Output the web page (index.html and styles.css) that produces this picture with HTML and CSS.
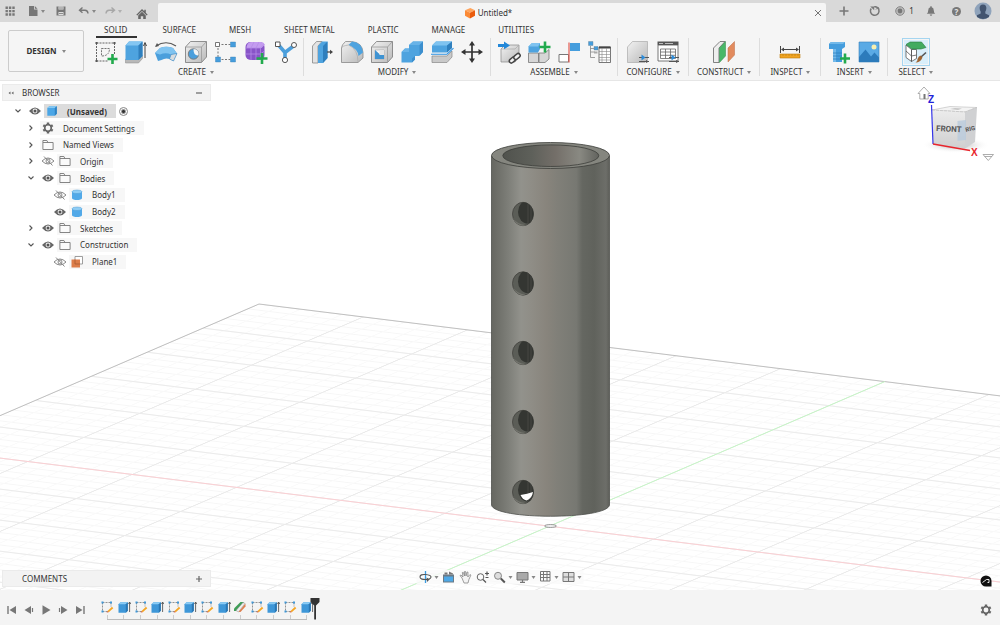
FILE: index.html
```
<!DOCTYPE html>
<html lang="en">

<head>
    <meta charset="UTF-8">
    <meta name="viewport" content="width=device-width, initial-scale=1.0">
    <title>Untitled*</title>
    <link rel="stylesheet" href="styles.css">
</head>

<body>
    <!-- shared icons -->
    <svg class="defs" width="0" height="0" aria-hidden="true">
        <symbol id="eye" viewBox="0 0 16 16">
            <path d="M2 8Q8 1 14 8Q8 15 2 8z" fill="#666" />
            <circle cx="8" cy="8" r="2.4" fill="#eee" />
            <circle cx="8" cy="8" r="1.5" fill="#555" />
        </symbol>
        <symbol id="eye-off" viewBox="0 0 16 16">
            <path d="M2 8Q8 2 14 8Q8 14 2 8zM4 3.5l8.5 9" fill="none" stroke="#888" stroke-width="1" />
            <circle cx="8" cy="8" r="2" fill="none" stroke="#888" stroke-width="1" />
        </symbol>
        <symbol id="folder" viewBox="0 0 16 16">
            <path d="M2.9 12.5v-9h4l1 2h5.2v7zM3 5.5h5" fill="#fafafa" stroke="#777" stroke-width=".9" />
        </symbol>
        <symbol id="gear" viewBox="0 0 16 16">
            <path d="M8 2.6v1.6M8 11.8v1.6M3.3 5.3l1.5.9M11.2 9.8l1.5.9M3.3 10.7l1.5-.9M11.2 6.2l1.5-.9" stroke="#666" stroke-width="2.4" />
            <circle cx="8" cy="8" r="3.3" fill="none" stroke="#666" stroke-width="1.7" />
        </symbol>
        <symbol id="right" viewBox="0 0 12 12">
            <path d="M4.5 3.500l2.500 2.500-2.500 2.500" fill="none" stroke="#555" stroke-width="1.1" />
        </symbol>
        <symbol id="down" viewBox="0 0 12 12">
            <path d="M3.500 4.500l2.500 2.500 2.500-2.500" fill="none" stroke="#555" stroke-width="1.1" />
        </symbol>
        <symbol id="cube" viewBox="0 0 16 16">
            <path d="M3.3 5l2-1.8h7.5v7.6l-2 2H3.3z" fill="#4ba6e6" />
            <path d="M3.3 5l2-1.8h7.5l-2 1.8z" fill="#86c8f2" />
            <path d="M10.8 5l2-1.8v7.6l-2 2z" fill="#2f82c2" />
        </symbol>
        <symbol id="body" viewBox="0 0 16 16">
            <path d="M3 4.8v6.4c0 2.4 10 2.4 10 0V4.8z" fill="#52a9e8" />
            <ellipse cx="8" cy="4.8" rx="5" ry="1.8" fill="#8fcdf5" stroke="#4b9bd4" stroke-width=".5" />
        </symbol>
        <symbol id="sketch" viewBox="0 0 16 16">
            <path d="M3.5 3.5h8.5M3.5 3.5v9h5M12 3.5v4" fill="none" stroke="#888" stroke-width=".9" stroke-dasharray="2 1" />
            <path d="M2.5 2.5h2v2h-2zM11 2.5h2v2h-2zM2.5 11.5h2v2h-2z" fill="#3e97d8" />
            <path d="M8.5 12l4.5-4.2 1.3 1.4-4.6 4z" fill="#f5a623" />
            <path d="M7.6 13.6l.9-1.6 1.2 1.2z" fill="#d2553a" />
        </symbol>
        <symbol id="extrude" viewBox="0 0 16 16">
            <path d="M2.5 5.2l2-2h7.3v8.6l-2 2H2.5z" fill="#3e97d8" />
            <path d="M2.5 5.2l2-2h7.3l-2 2z" fill="#8acbf5" />
            <path d="M9.8 5.2l2-2v8.6l-2 2z" fill="#2b77b3" />
            <path d="M13.6 13V3.5M12.5 5l1.1-2 1.1 2" fill="none" stroke="#444" stroke-width=".8" />
        </symbol>
        <symbol id="plane" viewBox="0 0 16 16">
            <path d="M6 2.5h7.5v7.5H6z" fill="#fff" stroke="#888" stroke-width=".8" />
            <path d="M2.5 5.5h8.5v8h-8.5z" fill="#dc7d4a" />
            <path d="M6 5.5v4.5h5" fill="none" stroke="#a55a32" stroke-width=".8" />
        </symbol>
        <symbol id="cplane" viewBox="0 0 16 16">
            <path d="M2 9.500L8.500 3h3.500L5.500 12H2z" fill="#3f9e57" />
            <path d="M4 11.500L11 3.500l2 1-6.500 8.500z" fill="#eee" stroke="#888" stroke-width=".5" />
            <path d="M6.500 13L13.500 4.500v3L8.500 13z" fill="#dd8050" />
        </symbol>
        <linearGradient id="grey" x2="1" y2="1">
            <stop offset="0" stop-color="#f2f2f2" />
            <stop offset="1" stop-color="#b9b9b9" />
        </linearGradient>
    </svg>

    <header class="topbar">
        <div class="quick">
            <button class="icon-btn" aria-label="Data panel"><svg viewBox="0 0 16 16">
                <path d="M3.5 3.5h2.4v2.4H3.5zM6.9 3.5h2.4v2.4H6.9zM10.3 3.5h2.4v2.4h-2.4zM3.5 6.9h2.4v2.4H3.5zM6.9 6.9h2.4v2.4H6.9zM10.3 6.9h2.4v2.4h-2.4zM3.5 10.3h2.4v2.4H3.5zM6.9 10.3h2.4v2.4H6.9zM10.3 10.3h2.4v2.4h-2.4z" fill="#777" /></svg></button>
            <button class="icon-btn caret file" aria-label="File"><svg viewBox="0 0 16 16">
                <path d="M4 3h5v3.5h3.5V13H4z" fill="#777" />
                <path d="M9.8 3l2.7 2.8H9.8z" fill="#777" /></svg></button>
            <button class="icon-btn" aria-label="Save"><svg viewBox="0 0 16 16">
                <path d="M3.5 3.5h9v9h-9z" fill="#777" />
                <path d="M5.5 3.5h5v3h-5zM5.5 9h5v3h-5z" fill="#ddd" />
                <path d="M6 5h4M6 10.5h4" stroke="#777" stroke-width=".8" /></svg></button>
            <button class="icon-btn caret undo" aria-label="Undo"><svg viewBox="0 0 16 16">
                <path d="M6.5 4.5L3.5 7.2l3 2.5M4 7.2h5q2.8 0 3 3.3" fill="none" stroke="#777" stroke-width="1.4" /></svg></button>
            <button class="icon-btn caret redo" aria-label="Redo"><svg viewBox="0 0 16 16">
                <path d="M9.5 4.5l3 2.7-3 2.5M12 7.2H7q-2.8 0-3 3.3" fill="none" stroke="#777" stroke-width="1.4" /></svg></button>
            <button class="icon-btn home" aria-label="Home"><svg viewBox="0 0 16 16">
                <path d="M8 3L2.300 8.700l1 .9L8 5l4.700 4.600 1-.9L11.800 6.800V3.700h-1.500v1.600z" fill="#666" />
                <path d="M4.200 9.500L8 5.800l3.800 3.700V13H9.200v-2.700H6.800V13H4.200z" fill="#666" /></svg></button>
        </div>
        <div class="doc-tab">
            <svg class="doc-icon" viewBox="0 0 12 12">
                <path d="M1 3.2L6.3 1 11 3.3 6 5.7z" fill="#ffa45c" />
                <path d="M1 3.2l5 2.5V11.5L1 8.7z" fill="#fb8a36" />
                <path d="M6 5.7l5-2.4V8.7l-5 2.8z" fill="#ea5b0c" />
            </svg>
            <span class="doc-title">Untitled*</span>
            <button class="close" aria-label="Close"><svg viewBox="0 0 8 8">
                <path d="M1 1l6 6M7 1L1 7" stroke="#666" stroke-width=".9" /></svg></button>
        </div>
        <div class="account">
            <button class="icon-btn" aria-label="New design"><svg viewBox="0 0 16 16">
                <path d="M8 3.500v9M3.500 8h9" stroke="#777" stroke-width="1.6" /></svg></button>
            <button class="icon-btn extensions" aria-label="Extensions"><svg viewBox="0 0 16 16">
                <path d="M4.2 5.5a4.3 4.3 0 1 0 3-1.8M8.5 3.7a4.3 4.3 0 0 1 3.6 3.2" fill="none" stroke="#777" stroke-width="1.5" />
                <path d="M3.2 3.5h4v3.8z" fill="#777" />
                <path d="M9 6.500l2.500-2.500" fill="none" stroke="#777" stroke-width="1" /></svg></button>
            <button class="icon-btn jobs" aria-label="Job status"><svg viewBox="0 0 16 16">
                <circle cx="8" cy="8" r="4.3" fill="#bbb" stroke="#888" stroke-width="1" />
                <circle cx="8" cy="8" r="2.4" fill="#777" /></svg>1</button>
            <button class="icon-btn" aria-label="Notifications"><svg viewBox="0 0 16 16">
                <path d="M7.3 3.2h1.4v1q2.1.5 2.1 3.3 0 2.2 1.4 3.3H3.8q1.4-1.1 1.4-3.3 0-2.8 2.1-3.3zM6.7 11.5h2.600q-.2 1.3-1.3 1.3t-1.3-1.3z" fill="#777" /></svg></button>
            <button class="icon-btn help" aria-label="Help"><span>?</span></button>
            <button class="avatar" aria-label="Profile"><svg viewBox="0 0 18 18">
                <circle cx="9" cy="9" r="8.500" fill="#8fa3bb" />
                <path d="M9 2.5c4 0 4 4.5 2.300 7.3v1.7l3.700 1.7v1.8q-6 4-12 0v-1.8l3.700-1.7V9.8C5 7 5 2.5 9 2.5z" fill="#42546f" /></svg></button>
        </div>
    </header>

    <section class="ribbon">
        <button class="workspace caret">DESIGN</button>
        <div class="ribbon-main">
            <nav class="tabs">
                <button class="tab active">SOLID</button>
                <button class="tab">SURFACE</button>
                <button class="tab">MESH</button>
                <button class="tab">SHEET METAL</button>
                <button class="tab">PLASTIC</button>
                <button class="tab">MANAGE</button>
                <button class="tab">UTILITIES</button>
            </nav>
            <div class="groups">
                <div class="group first">
                    <div class="tools">
                        <button class="tool" aria-label="Create sketch"><svg viewBox="0 0 24 24">
                            <path d="M2.5 3h18M2.5 3v18M2.5 21h12M20.5 3v11" fill="none" stroke="#555" stroke-width=".9" stroke-dasharray="2 1" />
                            <path d="M1.5 2h2v2h-2zM19.5 2h2v2h-2zM1.5 20h2v2h-2z" fill="#555" />
                            <path d="M7.5 8.500h8q0 7.500-8 7.500z" fill="none" stroke="#666" stroke-width=".9" stroke-dasharray="2 1" />
                            <path d="M18.5 14v10M13.5 19h10" stroke="#22aa4d" stroke-width="2.6" /></svg></button>
                        <button class="tool" aria-label="Extrude"><svg viewBox="0 0 24 24">
                            <path d="M1.5 19h13l4-3.5v3L14.5 23h-13z" fill="#b8b8b8" stroke="#888" stroke-width=".5" />
                            <path d="M1.5 5.5L5 1.5h13.5V16l-4 4h-13z" fill="#4ea3df" />
                            <path d="M1.5 5.5L5 1.5h13.5l-4 4z" fill="#84c6f2" />
                            <path d="M14.5 5.5l4-4V16l-4 4z" fill="#2f7fbd" />
                            <path d="M21 18V3.5M19.5 6L21 2.5 22.5 6" fill="none" stroke="#444" stroke-width="1" /></svg></button>
                        <button class="tool" aria-label="Revolve"><svg viewBox="0 0 24 24">
                            <path d="M2 6Q12-.5 22 6" fill="none" stroke="#555" stroke-width="1.2" />
                            <path d="M1 7l2-4 2 3z" fill="#555" />
                            <path d="M1 13l5-5q6-2.5 13 0l4 5.500-3.5 7.500-4-2q-4-1.5-8 1L4 21z" fill="#4b9fdc" />
                            <path d="M1 13l5-5q6-2.5 13 0l4 5.500-6 1q-5-2.5-11 0z" fill="#7fc3f0" />
                            <path d="M17 14.500l6-1-3.500 7.500-4-2z" fill="#d8dcdf" stroke="#3a88c4" stroke-width=".6" /></svg></button>
                        <button class="tool" aria-label="Hole"><svg viewBox="0 0 24 24">
                            <path d="M1.5 7l5-5.5h16V17l-5 5.5h-16z" fill="url(#grey)" stroke="#777" stroke-width=".8" />
                            <path d="M1.5 7h16v15.5M17.5 7l5-5.5" fill="none" stroke="#999" stroke-width=".8" />
                            <circle cx="9.5" cy="14" r="5.2" fill="#4b9fdc" stroke="#777" stroke-width=".9" />
                            <path d="M9.5 9q6 .5 5 6.5-5 .5-5-6.5z" fill="#f4f4f4" /></svg></button>
                        <button class="tool" aria-label="Pattern"><svg viewBox="0 0 24 24">
                            <path d="M4 4.500h16M4 4.500v15M4 19.500h16" fill="none" stroke="#777" stroke-dasharray="2 1.5" />
                            <path d="M1.500 2.500h4v4h-4z" fill="#fff" stroke="#555" stroke-width=".8" />
                            <path d="M16.500 2h5v5h-5zM16.500 17h5v5h-5zM1.500 17h5v5h-5z" fill="#459ddd" stroke="#377fb2" stroke-width=".4" /></svg></button>
                        <button class="tool" aria-label="Create form"><svg viewBox="0 0 24 24">
                            <rect x="1.5" y="2" width="19" height="18" rx="5" fill="#8854c8" />
                            <path d="M2.5 7q1-5 5-5h9q4 0 4 3l-3 3H3z" fill="#c49cf0" />
                            <path d="M2 8h14.5l4-4M2 14h14.5l4-3M7 20V8l3-6M12 20V8l3-6M16.5 8v12" fill="none" stroke="#b48be6" stroke-width=".8" />
                            <path d="M18 13v11M12.5 18.5h11" stroke="#22aa4d" stroke-width="2.6" /></svg></button>
                        <button class="tool" aria-label="Automated modeling"><svg viewBox="0 0 24 24">
                            <path d="M4.5 5l6.500 7.500L19.5 6M11 12v8" fill="none" stroke="#4b9fdc" stroke-width="3.6" />
                            <path d="M1.500 2H6v4.5H1.500z" fill="#fff" stroke="#555" />
                            <circle cx="20" cy="5" r="2.5" fill="#fff" stroke="#555" />
                            <circle cx="11" cy="20" r="2.6" fill="#fff" stroke="#555" /></svg></button>
                    </div>
                    <button class="group-name caret">CREATE</button>
                </div>
                <div class="group">
                    <div class="tools">
                        <button class="tool" aria-label="Press pull"><svg viewBox="0 0 24 24">
                            <path d="M2.5 6l4-4.5H12L8 6v17H2.5z" fill="#e3e3e3" stroke="#888" stroke-width=".8" />
                            <path d="M8 6l4-4.5h5.5V18L13 23H8z" fill="#4ea3df" />
                            <path d="M13 6l4.5-4.5V18L13 23z" fill="#2f7fbd" />
                            <path d="M17 12h4" stroke="#444" stroke-width="1.2" />
                            <path d="M20 9.8l3 2.2-3 2.2z" fill="#444" /></svg></button>
                        <button class="tool" aria-label="Fillet"><svg viewBox="0 0 24 24">
                            <path d="M1.5 8q0-3 4-6.500h6q11 1 11.5 11V18l-5 4.500h-16.500z" fill="url(#grey)" stroke="#888" stroke-width=".8" />
                            <path d="M12 1.500q10 1 11 11l-4.500 3.500Q18 9 8.500 5z" fill="#4ea3df" />
                            <path d="M1.500 8q0-2 7-3 9.500 4 9.500 17" fill="none" stroke="#aaa" stroke-width=".7" /></svg></button>
                        <button class="tool" aria-label="Shell"><svg viewBox="0 0 24 24">
                            <path d="M1.5 7l5-5.5h16V17l-5 5.5h-16z" fill="url(#grey)" stroke="#777" stroke-width=".8" />
                            <path d="M1.5 7h16v15.5M17.5 7l5-5.5" fill="none" stroke="#999" stroke-width=".8" />
                            <path d="M5 10h9v9H5z" fill="#f7f7f7" stroke="#999" stroke-width=".5" />
                            <path d="M5 10l5 4.5h4V19H5z" fill="#3f93d2" />
                            <path d="M9.5 10v5h4.5v-5z" fill="#e4e4e4" /></svg></button>
                        <button class="tool" aria-label="Combine"><svg viewBox="0 0 24 24">
                            <path d="M9 5l4-3.500h10V12l-4 4h-4v3.500l-3 3H1.500V12l3.500-3.500h4z" fill="#4ea3df" />
                            <path d="M9 5l4-3.500h10L19.500 5zM1.500 12L5 8.500h4V12z" fill="#68b3e8" />
                            <path d="M19.500 5L23 1.500V12l-3.500 4zM12 18.500l3-2.500v3.500l-3 3z" fill="#3c8fce" /></svg></button>
                        <button class="tool" aria-label="Split body"><svg viewBox="0 0 24 24">
                            <path d="M2 16h15l5-5v6l-5 5.500H2z" fill="#c9c9c9" stroke="#888" stroke-width=".7" />
                            <path d="M2 5.500l4-4h16V8l-5 4.500H2z" fill="#4ea3df" />
                            <path d="M2 5.500l4-4h16l-5 4z" fill="#7fc3f0" />
                            <path d="M17 5.500l5-4V8l-5 4.500z" fill="#2f7fbd" />
                            <path d="M1 14.200h16l6.500-6" fill="none" stroke="#2b91e2" stroke-width="1.1" /></svg></button>
                        <button class="tool" aria-label="Move"><svg viewBox="0 0 24 24">
                            <path d="M12 4v16M4 12h16" stroke="#333" stroke-width="1.700" />
                            <path d="M12 1l3 4.500H9zM12 23l3-4.500H9zM1 12l4.500-3v6zM23 12l-4.500-3v6z" fill="#333" /></svg></button>
                    </div>
                    <button class="group-name caret">MODIFY</button>
                </div>
                <div class="group">
                    <div class="tools">
                        <button class="tool" aria-label="Insert derive"><svg viewBox="0 0 24 24">
                            <path d="M4 9l4-4h14v12l-4 5H4z" fill="url(#grey)" stroke="#888" stroke-width=".7" />
                            <path d="M4 9h14l4-4" fill="none" stroke="#aaa" stroke-width=".7" />
                            <path d="M1 4h6V1.500L13 5.500 7 9.300V7H1z" fill="#2287d8" />
                            <g fill="#f3f3f3" stroke="#444" stroke-width="1.5">
                                <rect x="12" y="18" width="7" height="4" rx="2" transform="rotate(-40 15.500 20)" />
                                <rect x="16.500" y="14.500" width="7" height="4" rx="2" transform="rotate(-40 20 16.500)" />
                            </g></svg></button>
                        <button class="tool" aria-label="New component"><svg viewBox="0 0 24 24">
                            <path d="M1.500 13h10v9.500h-10zM12 13h6l4-3.500V19l-4 3.500h-6z" fill="#d6d6d6" stroke="#777" stroke-width=".8" />
                            <path d="M1.500 6.500L5 3h8v6l-2 3.500H1.500z" fill="#4ea3df" />
                            <path d="M1.500 6.500L5 3h8l-2 3.500z" fill="#7fc3f0" />
                            <path d="M18 1.500v11M12.500 7h11" stroke="#22aa4d" stroke-width="2.600" /></svg></button>
                        <button class="tool" aria-label="Joint"><svg viewBox="0 0 24 24">
                            <path d="M2 14.500h9.500V22H2z" fill="#fff" stroke="#777" />
                            <path d="M13 3h10v8H13z" fill="#459ddd" />
                            <path d="M12 2.500V22.500" stroke="#e25a50" stroke-width="1.2" /></svg></button>
                        <button class="tool" aria-label="Bill of materials"><svg viewBox="0 0 24 24">
                            <path d="M1.500 1.500h4.500v4H1.500zM7 6.500h4v3.500H7z" fill="#459ddd" stroke="#66808f" stroke-width=".4" />
                            <path d="M3.500 6v11.500H8M3.500 12H8M3.500 8.500h4" fill="none" stroke="#888" stroke-width=".8" />
                            <path d="M7 11.500h3.500v2H7z" fill="#aaa" />
                            <path d="M12 7h11.500v15.500H12z" fill="#fff" stroke="#555" stroke-width=".8" />
                            <path d="M12 6.500h11.500v2H12z" fill="#444" />
                            <path d="M12 11.500h11.500M12 14.500h11.500M12 17.500h11.500M12 20h11.500M15 8v14M19.500 8v14" stroke="#888" stroke-width=".6" /></svg></button>
                    </div>
                    <button class="group-name caret">ASSEMBLE</button>
                </div>
                <div class="group medium">
                    <div class="tools">
                        <button class="tool" aria-label="Configure"><svg viewBox="0 0 24 24">
                            <path d="M1.500 7l5-5.500h15V20L19 22.500H1.500z" fill="url(#grey)" stroke="#aaa" stroke-width=".7" />
                            <path d="M13 17.500h10M13 21.500h10" stroke="#555" />
                            <path d="M15.500 14.500l4 3-4 3z" fill="#2c8cda" />
                            <path d="M20 20l3 1.500-3 1.500z" fill="#555" /></svg></button>
                        <button class="tool" aria-label="Configuration table"><svg viewBox="0 0 24 24">
                            <path d="M2 5h20v16H2z" fill="#fff" stroke="#555" stroke-width=".8" />
                            <path d="M1.500 1.500h21V5h-21z" fill="#555" />
                            <path d="M3 3.500h4M9 3.500h8" stroke="#bbb" />
                            <path d="M4.500 9h15v9.500h-15zM4.500 12h15M4.500 15.300h15M9.500 9v9.500M14.500 9v9.500" fill="none" stroke="#666" stroke-width=".8" />
                            <path d="M13 17.500h10M13 21.500h10" stroke="#555" />
                            <path d="M15.500 14.500l4 3-4 3z" fill="#2c8cda" />
                            <path d="M20 20l3 1.500-3 1.500z" fill="#555" /></svg></button>
                    </div>
                    <button class="group-name caret">CONFIGURE</button>
                </div>
                <div class="group medium">
                    <div class="tools">
                        <button class="tool" aria-label="Offset plane"><svg viewBox="0 0 24 24">
                            <path d="M1.500 8L8 1.500h5L7 8v14.500H1.500z" fill="#eee" stroke="#666" stroke-width=".8" />
                            <path d="M7.500 8l6-6.500V16l-6 6.500z" fill="#49b868" stroke="#318648" stroke-width=".5" />
                            <path d="M16 8l6.500-6.500V15L16 22z" fill="#e28b5e" stroke="#bd6d44" stroke-width=".5" /></svg></button>
                    </div>
                    <button class="group-name caret">CONSTRUCT</button>
                </div>
                <div class="group wide">
                    <div class="tools">
                        <button class="tool" aria-label="Measure"><svg viewBox="0 0 24 24">
                            <path d="M2.500 6v7M21.500 6v7M4 9.500h16" stroke="#444" stroke-width="1" />
                            <path d="M3 9.500l3-2v4zM21 9.500l-3-2v4z" fill="#444" />
                            <path d="M2 14h20v4H2z" fill="#f0a422" stroke="#bd7b0c" stroke-width=".6" />
                            <path d="M5 14v2M8 14v2M11 14v2M14 14v2M17 14v2M20 14v2" stroke="#b97c12" stroke-width=".6" /></svg></button>
                    </div>
                    <button class="group-name caret">INSPECT</button>
                </div>
                <div class="group">
                    <div class="tools">
                        <button class="tool" aria-label="Insert fastener"><svg viewBox="0 0 24 24">
                            <path d="M2 4l2-2h14v5l-3 2v13H6V9H2z" fill="#459ddd" />
                            <path d="M2 4l2-2h14l-2 2zM6 9h3v13H6z" fill="#73b9e9" />
                            <path d="M6 13h9M6 16h9M6 19h9" stroke="#2f7fbd" stroke-width=".8" />
                            <path d="M18 13.500v10M13 18.500h10" stroke="#22aa4d" stroke-width="2.600" /></svg></button>
                        <button class="tool" aria-label="Insert image"><svg viewBox="0 0 24 24">
                            <path d="M2 2h20v20H2z" fill="#5aaae5" stroke="#377fb8" stroke-width=".6" />
                            <path d="M2 17l6.500-7.500 5.500 7 3.500-4 4.500 5V22H2z" fill="#2c7bbb" />
                            <circle cx="17" cy="7" r="2.500" fill="#f8efb0" /></svg></button>
                    </div>
                    <button class="group-name caret">INSERT</button>
                </div>
                <div class="group wide last">
                    <div class="tools">
                        <button class="tool selected" aria-label="Select"><svg viewBox="0 0 24 24">
                            <path d="M2 5l5.500 4.500v12L2 17.500zM7.500 9.500h5v9l-5 3z" fill="#fff" stroke="#555" stroke-width=".8" />
                            <path d="M2 11l5.500 5 5-1" fill="none" stroke="#555" stroke-width=".8" />
                            <path d="M2 4.500L6 2h11.500l4.500 5.500-5 1.500H8z" fill="#42ab60" stroke="#277a40" stroke-width=".6" />
                            <path d="M22 12.500l-5 4.500" stroke="#555" stroke-width="1.600" />
                            <path d="M16.500 15.500l2 2q-2 5-7 5 2.500-1.500 2-3.500 1-3 3-3.500z" fill="#a06532" /></svg></button>
                    </div>
                    <button class="group-name caret">SELECT</button>
                </div>
            </div>
        </div>
    </section>

    <main class="viewport">
        <svg class="scene" viewBox="0 81 1000 509" preserveAspectRatio="xMidYMid slice">
            <defs>
                <!-- one grid square is 100 units, turned into the floor plane -->
                <pattern id="minor" x="-10" y="-10" width="20" height="20" patternUnits="userSpaceOnUse">
                    <path d="M0 10H20" stroke="#f6f6f6" stroke-width="3" />
                    <path d="M10 0V20" stroke="#fafafa" stroke-width="1.8" />
                </pattern>
                <pattern id="major" x="-50" y="-50" width="100" height="100" patternUnits="userSpaceOnUse">
                    <path d="M0 50H100" stroke="#ebebeb" stroke-width="3" />
                    <path d="M50 0V100" stroke="#ebebeb" stroke-width="1.8" />
                </pattern>
                <linearGradient id="metal">
                    <stop offset="0" stop-color="#666761" />
                    <stop offset=".08" stop-color="#73746e" />
                    <stop offset=".14" stop-color="#7d7e78" />
                    <stop offset=".25" stop-color="#92928c" />
                    <stop offset=".34" stop-color="#8f8d86" />
                    <stop offset=".47" stop-color="#88847c" />
                    <stop offset=".55" stop-color="#818079" />
                    <stop offset=".72" stop-color="#777872" />
                    <stop offset=".77" stop-color="#656761" />
                    <stop offset=".87" stop-color="#60625c" />
                    <stop offset=".97" stop-color="#6d6e69" />
                    <stop offset="1" stop-color="#5d5e59" />
                </linearGradient>
                <linearGradient id="bore">
                    <stop offset="0" stop-color="#50524d" />
                    <stop offset=".3" stop-color="#5e605a" />
                    <stop offset=".55" stop-color="#746f69" />
                    <stop offset=".8" stop-color="#898982" />
                    <stop offset="1" stop-color="#62635e" />
                </linearGradient>
                <clipPath id="round">
                    <ellipse cx="0" cy="0" rx="10.500" ry="11.700" />
                </clipPath>
                <symbol id="hole" viewBox="-12 -13 24 26">
                    <ellipse cx="0" cy="0" rx="10.500" ry="11.700" fill="#5b5d57" stroke="#42433f" stroke-width=".8" />
                    <g clip-path="url(#round)">
                        <path d="M-10 4q4 6 12 7l-1 3-10-3z" fill="#74756e" />
                        <ellipse cx="5" cy="-2" rx="10" ry="11.500" fill="#343632" />
                        <path d="M5-12v21M8-12v21" stroke="#40423e" stroke-width="1.500" />
                    </g>
                </symbol>
            </defs>
            <g transform="matrix(1.043 .1293 -.559 .241 259 304)">
                <path d="M0 0H1300V1300H0z" fill="url(#minor)" />
                <path d="M0 0H1300V1300H0z" fill="url(#major)" />
                <path d="M0 1300V0H1300" fill="none" stroke="#c0c0c0" vector-effect="non-scaling-stroke" />
                <path d="M0 600H1300" stroke="#fbcfd3" vector-effect="non-scaling-stroke" />
                <path d="M600 0V1300" stroke="#c6f6c6" vector-effect="non-scaling-stroke" />
            </g>
            <ellipse cx="550.500" cy="526" rx="6" ry="1.500" fill="#eee" stroke="#888" stroke-width=".8" />
            <path d="M491.500 156V505C494 520 607 520 609.500 505V156z" fill="url(#metal)" stroke="#4f504c" stroke-width=".8" />
            <ellipse cx="550.500" cy="155.500" rx="59" ry="13" fill="#85867f" stroke="#3c3d3a" stroke-width=".8" />
            <ellipse cx="550.800" cy="155.700" rx="48" ry="10.800" fill="url(#bore)" stroke="#3c3d3a" stroke-width=".8" />
            <use href="#hole" x="511" y="201" width="24" height="26" />
            <use href="#hole" x="511" y="270.500" width="24" height="26" />
            <use href="#hole" x="511" y="340" width="24" height="26" />
            <use href="#hole" x="511" y="409" width="24" height="26" />
            <use href="#hole" x="511" y="479" width="24" height="26" />
            <path d="M520.500 495q7-1 12.500-3-1 6.500-6.500 8.500-4-1-6-5.500z" fill="#fff" />
        </svg>

        <aside class="browser">
            <div class="panel-head">
                <button class="mark" aria-label="Collapse"><svg viewBox="0 0 10 10">
                    <path d="M4.500 3.500L2.500 5l2 1.500zM7.500 3.500L5.500 5l2 1.500z" fill="#666" /></svg></button>
                <span class="panel-title">BROWSER</span>
                <button class="mark" aria-label="Minimize"><svg viewBox="0 0 10 10">
                    <path d="M2 5h6" stroke="#666" stroke-width="1.200" /></svg></button>
            </div>
            <ul class="tree">
                <li class="row root">
                    <button class="toggle" aria-label="Toggle"><svg><use href="#down" /></svg></button>
                    <button class="eye" aria-label="Visibility"><svg><use href="#eye" /></svg></button>
                    <span class="item"><svg><use href="#cube" /></svg><span class="label">(Unsaved)</span></span>
                    <input class="activate" type="radio" name="component" aria-label="Activate" checked>
                </li>
                <li class="row">
                    <button class="toggle" aria-label="Toggle"><svg><use href="#right" /></svg></button>
                    <span class="item"><svg><use href="#gear" /></svg><span class="label">Document Settings</span></span>
                </li>
                <li class="row">
                    <button class="toggle" aria-label="Toggle"><svg><use href="#right" /></svg></button>
                    <span class="item"><svg><use href="#folder" /></svg><span class="label">Named Views</span></span>
                </li>
                <li class="row">
                    <button class="toggle" aria-label="Toggle"><svg><use href="#right" /></svg></button>
                    <button class="eye" aria-label="Visibility"><svg><use href="#eye-off" /></svg></button>
                    <span class="item"><svg><use href="#folder" /></svg><span class="label">Origin</span></span>
                </li>
                <li class="row">
                    <button class="toggle" aria-label="Toggle"><svg><use href="#down" /></svg></button>
                    <button class="eye" aria-label="Visibility"><svg><use href="#eye" /></svg></button>
                    <span class="item"><svg><use href="#folder" /></svg><span class="label">Bodies</span></span>
                </li>
                <li class="row leaf">
                    <button class="eye" aria-label="Visibility"><svg><use href="#eye-off" /></svg></button>
                    <span class="item"><svg><use href="#body" /></svg><span class="label">Body1</span></span>
                </li>
                <li class="row leaf">
                    <button class="eye" aria-label="Visibility"><svg><use href="#eye" /></svg></button>
                    <span class="item"><svg><use href="#body" /></svg><span class="label">Body2</span></span>
                </li>
                <li class="row">
                    <button class="toggle" aria-label="Toggle"><svg><use href="#right" /></svg></button>
                    <button class="eye" aria-label="Visibility"><svg><use href="#eye" /></svg></button>
                    <span class="item"><svg><use href="#folder" /></svg><span class="label">Sketches</span></span>
                </li>
                <li class="row">
                    <button class="toggle" aria-label="Toggle"><svg><use href="#down" /></svg></button>
                    <button class="eye" aria-label="Visibility"><svg><use href="#eye" /></svg></button>
                    <span class="item"><svg><use href="#folder" /></svg><span class="label">Construction</span></span>
                </li>
                <li class="row leaf">
                    <button class="eye" aria-label="Visibility"><svg><use href="#eye-off" /></svg></button>
                    <span class="item"><svg><use href="#plane" /></svg><span class="label">Plane1</span></span>
                </li>
            </ul>
        </aside>

        <svg class="viewcube" viewBox="0 0 84 82">
            <defs>
                <linearGradient id="face" x2="0" y2="1">
                    <stop offset="0" stop-color="#ececec" />
                    <stop offset="1" stop-color="#cfcfcf" />
                </linearGradient>
                <radialGradient id="shade">
                    <stop offset="0" stop-color="#777" />
                    <stop offset="1" stop-color="#fff" stop-opacity="0" />
                </radialGradient>
            </defs>
            <ellipse cx="40" cy="64" rx="34" ry="8" fill="url(#shade)" opacity=".7" />
            <path d="M2 12.500L8 6l6 6.500h-1.800V18H3.800v-5.500z" fill="#fff" stroke="#999" stroke-width=".8" />
            <path d="M7.500 13h2v5h-2z" fill="#777" />
            <path d="M16 29l18-3.500 27 1L49 31z" fill="#f4f4f4" stroke="#bbb" stroke-width=".6" />
            <path d="M16 29l33 2v36.500L17 63z" fill="url(#face)" />
            <path d="M49 31l12-4.500-2 34.500L49 67.500z" fill="#d0d1d3" />
            <path d="M41.500 40l8.500-1v20l-8.500 1z" fill="#b9cbdc" opacity=".8" />
            <path d="M16 29l33 2 12-4.500" fill="none" stroke="#c4c4c4" stroke-width=".8" stroke-dasharray="3 1" />
            <path d="M34 28l5-1 7 .5-4 1.500z" fill="#999" opacity=".5" />
            <text class="cube-front" x="20" y="50" transform="rotate(3 20 50)">FRONT</text>
            <text class="cube-side" x="50" y="51" transform="rotate(-14 50 51)">RIG</text>
            <path d="M15.500 24L17 63" stroke="#3434e8" stroke-width="1.200" />
            <path d="M17 63l37 6.500" stroke="#e8252c" stroke-width="1.400" />
            <text class="axis-z" x="12" y="22">Z</text>
            <text class="axis-x" x="55" y="75">X</text>
            <path d="M67 73.500h10.500l-5.200 6z" fill="#fff" stroke="#999" stroke-width=".8" />
            <path d="M68.500 75.500h7.500" stroke="#999" stroke-width=".8" />
        </svg>

        <div class="comments">
            <div class="panel-head">
                <span class="panel-title">COMMENTS</span>
                <button class="mark" aria-label="Expand"><svg viewBox="0 0 10 10">
                    <path d="M2 5h6M5 2v6" stroke="#666" stroke-width="1.200" /></svg></button>
            </div>
        </div>

        <div class="navbar">
            <button class="nav caret" aria-label="Orbit"><svg viewBox="0 0 14 14">
                <path d="M7 1v12" stroke="#3a9be0" stroke-width="1.300" />
                <path d="M9 9.500Q1.500 10 1.500 7T7 4.500 12.500 7q0 1.500-2 2" fill="none" stroke="#555" stroke-width="1.100" />
                <path d="M8 7.500l3.300 1.700L8.500 12z" fill="#555" /></svg></button>
            <button class="nav" aria-label="Look at"><svg viewBox="0 0 14 14">
                <path d="M1.500 4.500h11v8h-11z" fill="#6b7a85" />
                <path d="M2.500 6.500h9v5h-9z" fill="#4ea8e6" />
                <path d="M3 2.500h3v2H3zM7.500 1.500l4 2v1h-4z" fill="#777" /></svg></button>
            <button class="nav" aria-label="Pan"><svg viewBox="0 0 14 14">
                <path d="M3.500 8L1.500 5.500l1-.5L4.500 7 3.800 2.500l1-.2L6 6V1.500h1.100L7.500 6l1-4 1 .2L9.300 7 11.500 4.500l.9.600-2 4.400L9.500 13h-4z" fill="#f4f4f4" stroke="#888" stroke-width=".8" /></svg></button>
            <button class="nav" aria-label="Zoom"><svg viewBox="0 0 14 14">
                <circle cx="5" cy="7" r="3.300" fill="none" stroke="#666" />
                <path d="M7.500 9.500l3 3M9.500 3.500h4M11.500 1.500v4M10 7.500h3" stroke="#555" stroke-width="1.200" /></svg></button>
            <button class="nav caret" aria-label="Fit"><svg viewBox="0 0 14 14">
                <circle cx="5.500" cy="5.800" r="3.500" fill="#ddd" stroke="#888" />
                <path d="M8.300 8.500l4 4" stroke="#555" stroke-width="1.900" /></svg></button>
            <button class="nav caret" aria-label="Display settings"><svg viewBox="0 0 14 14">
                <path d="M1.500 2.500h11v7.500h-11z" fill="#aaa" stroke="#777" />
                <path d="M4.500 12.300h5M7 10v2" stroke="#777" stroke-width="1.200" /></svg></button>
            <button class="nav caret" aria-label="Grid and snaps"><svg viewBox="0 0 14 14">
                <path d="M2 1.500h9.500v9.500H2zM2 4.500h9.500M2 7.500h9.500M5 1.500V11M8.500 1.500V11" fill="none" stroke="#777" /></svg></button>
            <button class="nav caret" aria-label="Viewports"><svg viewBox="0 0 14 14">
                <path d="M1.500 2.500h11v9h-11zM1.500 7h11M7 2.500v9" fill="#ddd" stroke="#777" /></svg></button>
        </div>

        <button class="assistant" aria-label="Assistant"><svg viewBox="0 0 12 12">
            <path d="M6 .5A5.500 5.500 0 1 0 6 11.500h5.500V6A5.500 5.500 0 0 0 6 .5z" fill="#111" />
            <path d="M2.500 7.500L6.500 4.500h2.500v3H7.500" fill="none" stroke="#fff" stroke-width=".9" /></svg></button>
    </main>

    <footer class="timeline">
        <div class="playback">
            <button class="play" aria-label="First"><svg viewBox="0 0 12 12">
                <path d="M2 2v8" stroke="#777" stroke-width="1.400" />
                <path d="M10 2v8L3.500 6z" fill="#777" /></svg></button>
            <button class="play" aria-label="Previous"><svg viewBox="0 0 12 12">
                <path d="M8 2v8L1.500 6z" fill="#777" />
                <path d="M9.500 4v4" stroke="#777" stroke-width="1.200" /></svg></button>
            <button class="play" aria-label="Play"><svg viewBox="0 0 12 12">
                <path d="M2.500 1.200L10.500 6l-8 4.800z" fill="#777" /></svg></button>
            <button class="play" aria-label="Next"><svg viewBox="0 0 12 12">
                <path d="M4 2v8l6.500-4z" fill="#777" />
                <path d="M2.500 4v4" stroke="#777" stroke-width="1.200" /></svg></button>
            <button class="play" aria-label="Last"><svg viewBox="0 0 12 12">
                <path d="M10 2v8" stroke="#777" stroke-width="1.400" />
                <path d="M2 2v8l6.500-4z" fill="#777" /></svg></button>
        </div>
        <div class="features">
            <button class="feature" aria-label="Sketch1"><svg><use href="#sketch" /></svg></button>
            <button class="feature" aria-label="Extrude1"><svg><use href="#extrude" /></svg></button>
            <button class="feature" aria-label="Sketch2"><svg><use href="#sketch" /></svg></button>
            <button class="feature" aria-label="Extrude2"><svg><use href="#extrude" /></svg></button>
            <button class="feature" aria-label="Sketch3"><svg><use href="#sketch" /></svg></button>
            <button class="feature" aria-label="Extrude3"><svg><use href="#extrude" /></svg></button>
            <button class="feature" aria-label="Sketch4"><svg><use href="#sketch" /></svg></button>
            <button class="feature" aria-label="Extrude4"><svg><use href="#extrude" /></svg></button>
            <button class="feature" aria-label="Plane1"><svg><use href="#cplane" /></svg></button>
            <button class="feature" aria-label="Sketch5"><svg><use href="#sketch" /></svg></button>
            <button class="feature" aria-label="Extrude5"><svg><use href="#extrude" /></svg></button>
            <button class="feature" aria-label="Sketch6"><svg><use href="#sketch" /></svg></button>
            <button class="feature" aria-label="Extrude6"><svg><use href="#extrude" /></svg></button>
            <svg class="marker" viewBox="0 0 10 24">
                <path d="M.5 1h9v4L6 8.500v14H4.200v-14L.5 5z" fill="#333" />
            </svg>
        </div>
        <button class="settings" aria-label="Timeline settings"><svg><use href="#gear" /></svg></button>
    </footer>
</body>

</html>
```
FILE: styles.css
```
* {
    margin: 0;
    padding: 0;
    box-sizing: border-box;
}

body {
    display: flex;
    flex-direction: column;
    height: 100vh;
    overflow: hidden;
    font: 8px/12px "Noto Sans", "Open Sans", sans-serif;
    color: #333;
    background-color: #fff;
}

button {
    display: flex;
    align-items: center;
    justify-content: center;
    border: none;
    background: none;
    font: inherit;
    color: inherit;
}

svg {
    display: block;
    flex: none;
}

.defs {
    position: absolute;
}

/* small drop-down arrow after a button */
.caret::after {
    content: "";
    border: 2px solid transparent;
    border-top: 3px solid #888;
    border-bottom: none;
    margin-left: 5px;
}

/* top bar */
.topbar {
    display: flex;
    height: 22px;
    background-color: #d9d9d9;
}

.quick {
    display: flex;
    align-items: center;
    width: 158px;
    padding-left: 2px;
    gap: 8px;
}

.icon-btn svg {
    width: 16px;
    height: 16px;
}

.icon-btn.caret::after {
    margin-left: 0;
}

.quick .file {
    margin-left: -1px;
}

.quick .undo {
    margin: 0 -2px 0 -1px;
}

.quick .redo {
    opacity: .5;
}

.quick .home {
    align-self: flex-end;
    margin-left: 4px;
}

.doc-tab {
    flex: 1;
    display: flex;
    align-items: center;
    margin-top: 3px;
    padding: 0 4px;
    background-color: #f5f5f5;
    border-radius: 2px 2px 0 0;
}

.doc-icon {
    width: 12px;
    height: 12px;
    margin-left: auto;
    margin-right: 2px;
}

.doc-title {
    margin-right: auto;
}

.close svg {
    width: 8px;
    height: 8px;
}

.account {
    display: flex;
    align-items: center;
    width: 174px;
    padding: 0 8px 0 10px;
    justify-content: space-between;
}

.extensions {
    margin-left: 6px;
}

.jobs {
    gap: 1px;
}

.help span {
    width: 9px;
    height: 9px;
    margin: 0 4px;
    border-radius: 50%;
    background-color: #777;
    color: #e5e5e5;
    font-weight: bold;
    line-height: 9px;
}

.avatar svg {
    width: 18px;
    height: 18px;
}

/* ribbon */
.ribbon {
    display: flex;
    height: 59px;
    background-color: #f5f5f5;
    border-bottom: 1px solid #e6e6e6;
}

.workspace {
    width: 76px;
    height: 42px;
    margin: 8px 10px 0 8px;
    border: 1px solid #ccc;
    border-radius: 2px;
    font-weight: bold;
}

.tabs {
    display: flex;
    gap: 17px;
    padding-left: 2px;
}

.tab {
    height: 16px;
    padding: 2px 8px 0;
    border-bottom: 2px solid transparent;
}

.tab.active {
    padding-right: 10px;
    border-color: #333;
}

.groups {
    display: flex;
}

.group {
    height: 38px;
    padding: 2px 6px 0;
    border-right: 1px solid #ddd;
}

.group.first {
    padding: 2px 5px 0 0;
}

.group.medium {
    padding: 2px 8px 0;
}

.group.wide {
    padding: 2px 10px 0;
}

.group.last {
    border-right: none;
}

.tools {
    display: flex;
    justify-content: center;
    gap: 6px;
}

.tool svg {
    width: 24px;
    height: 24px;
}

.tool.selected {
    background-color: #d9effb;
    outline: 1px solid #a5d5f0;
    outline-offset: 1px;
}

.group-name {
    width: 100%;
    height: 16px;
}

.group-name.caret::after {
    margin-left: 4px;
}

/* viewport */
.viewport {
    flex: 1;
    position: relative;
    min-height: 0;
    overflow: hidden;
}

.scene {
    position: absolute;
    width: 100%;
    height: 100%;
}

.browser {
    position: absolute;
    left: 2px;
    top: 3px;
    width: 209px;
}

.panel-head {
    display: flex;
    align-items: center;
    height: 17px;
    padding: 0 6px 0 3px;
    background-color: #f3f3f3;
    border: 1px solid #ebebeb;
}

.panel-title {
    flex: 1;
    margin-left: 6px;
}

.mark svg {
    width: 10px;
    height: 10px;
}

.tree {
    display: grid;
    grid-auto-rows: 1fr;
    height: 167px;
    margin-top: 2px;
    list-style: none;
}

.row {
    display: flex;
    align-items: center;
    padding-left: 23px;
}

.row.root {
    padding-left: 10px;
}

.row.leaf {
    padding-left: 50px;
}

.toggle {
    margin-right: 3px;
}

.toggle svg {
    width: 12px;
    height: 12px;
}

.eye {
    margin-right: 1px;
}

.eye svg,
.item svg {
    width: 16px;
    height: 16px;
}

.item {
    display: flex;
    align-items: center;
    height: 14px;
    padding-right: 9px;
    background-color: #f7f7f7;
}

.label {
    margin-left: 7px;
    padding-top: 1px;
}

.row.root .item {
    background-color: #dcdcdc;
    font-weight: bold;
}

.activate {
    appearance: none;
    width: 9px;
    height: 9px;
    margin-left: 3px;
    border: 1px solid #888;
    border-radius: 50%;
    background: radial-gradient(#333 1px, #fff 3px);
}

.viewcube {
    position: absolute;
    right: 0;
    top: 0;
    width: 84px;
    height: 82px;
}

.cube-front,
.cube-side {
    font: bold 8px Roboto, sans-serif;
    fill: #555;
}

.cube-side {
    font-size: 6px;
}

.axis-z,
.axis-x {
    font: bold 10px "Liberation Sans", sans-serif;
    fill: #2222d8;
}

.axis-x {
    fill: #e8252c;
}

.comments {
    position: absolute;
    left: 2px;
    bottom: 3px;
    width: 209px;
}

.comments .panel-head {
    padding-left: 13px;
}

.navbar {
    position: absolute;
    left: 50%;
    bottom: 6px;
    display: flex;
    gap: 3px;
    padding: 0 2px;
    background-color: rgba(250, 250, 250, .8);
    transform: translateX(-50%);
}

.nav svg {
    width: 14px;
    height: 14px;
}

.nav.caret::after {
    margin-left: 2px;
}

.assistant {
    position: absolute;
    right: 8px;
    bottom: 3px;
}

.assistant svg {
    width: 12px;
    height: 12px;
}

/* timeline */
.timeline {
    display: flex;
    align-items: center;
    height: 35px;
    padding: 4px 6px 0;
    background-color: #f4f4f4;
}

.playback {
    display: flex;
    gap: 5px;
}

.play svg {
    width: 12px;
    height: 12px;
}

.features {
    position: relative;
    display: flex;
    width: 216px;
    margin-left: 13px;
}

.feature {
    flex: 1;
    flex-direction: column;
}

.feature svg {
    width: 16px;
    height: 16px;
}

/* tick under each feature */
.feature::after {
    content: "";
    width: 100%;
    height: 4px;
    border-bottom: 1px solid #bbb;
    background: linear-gradient(#ccc, #ccc) center / 1px 100% no-repeat;
}

/* the line starts and ends at a tick */
.feature:first-child::after {
    width: 50%;
    align-self: flex-end;
    background-position: left;
}

.feature:nth-child(13)::after {
    width: 50%;
    align-self: flex-start;
    background-position: right;
}

.marker {
    position: absolute;
    right: -5px;
    top: -2px;
    width: 10px;
    height: 24px;
}

.settings {
    margin-left: auto;
}

.settings svg {
    width: 16px;
    height: 16px;
}
```
